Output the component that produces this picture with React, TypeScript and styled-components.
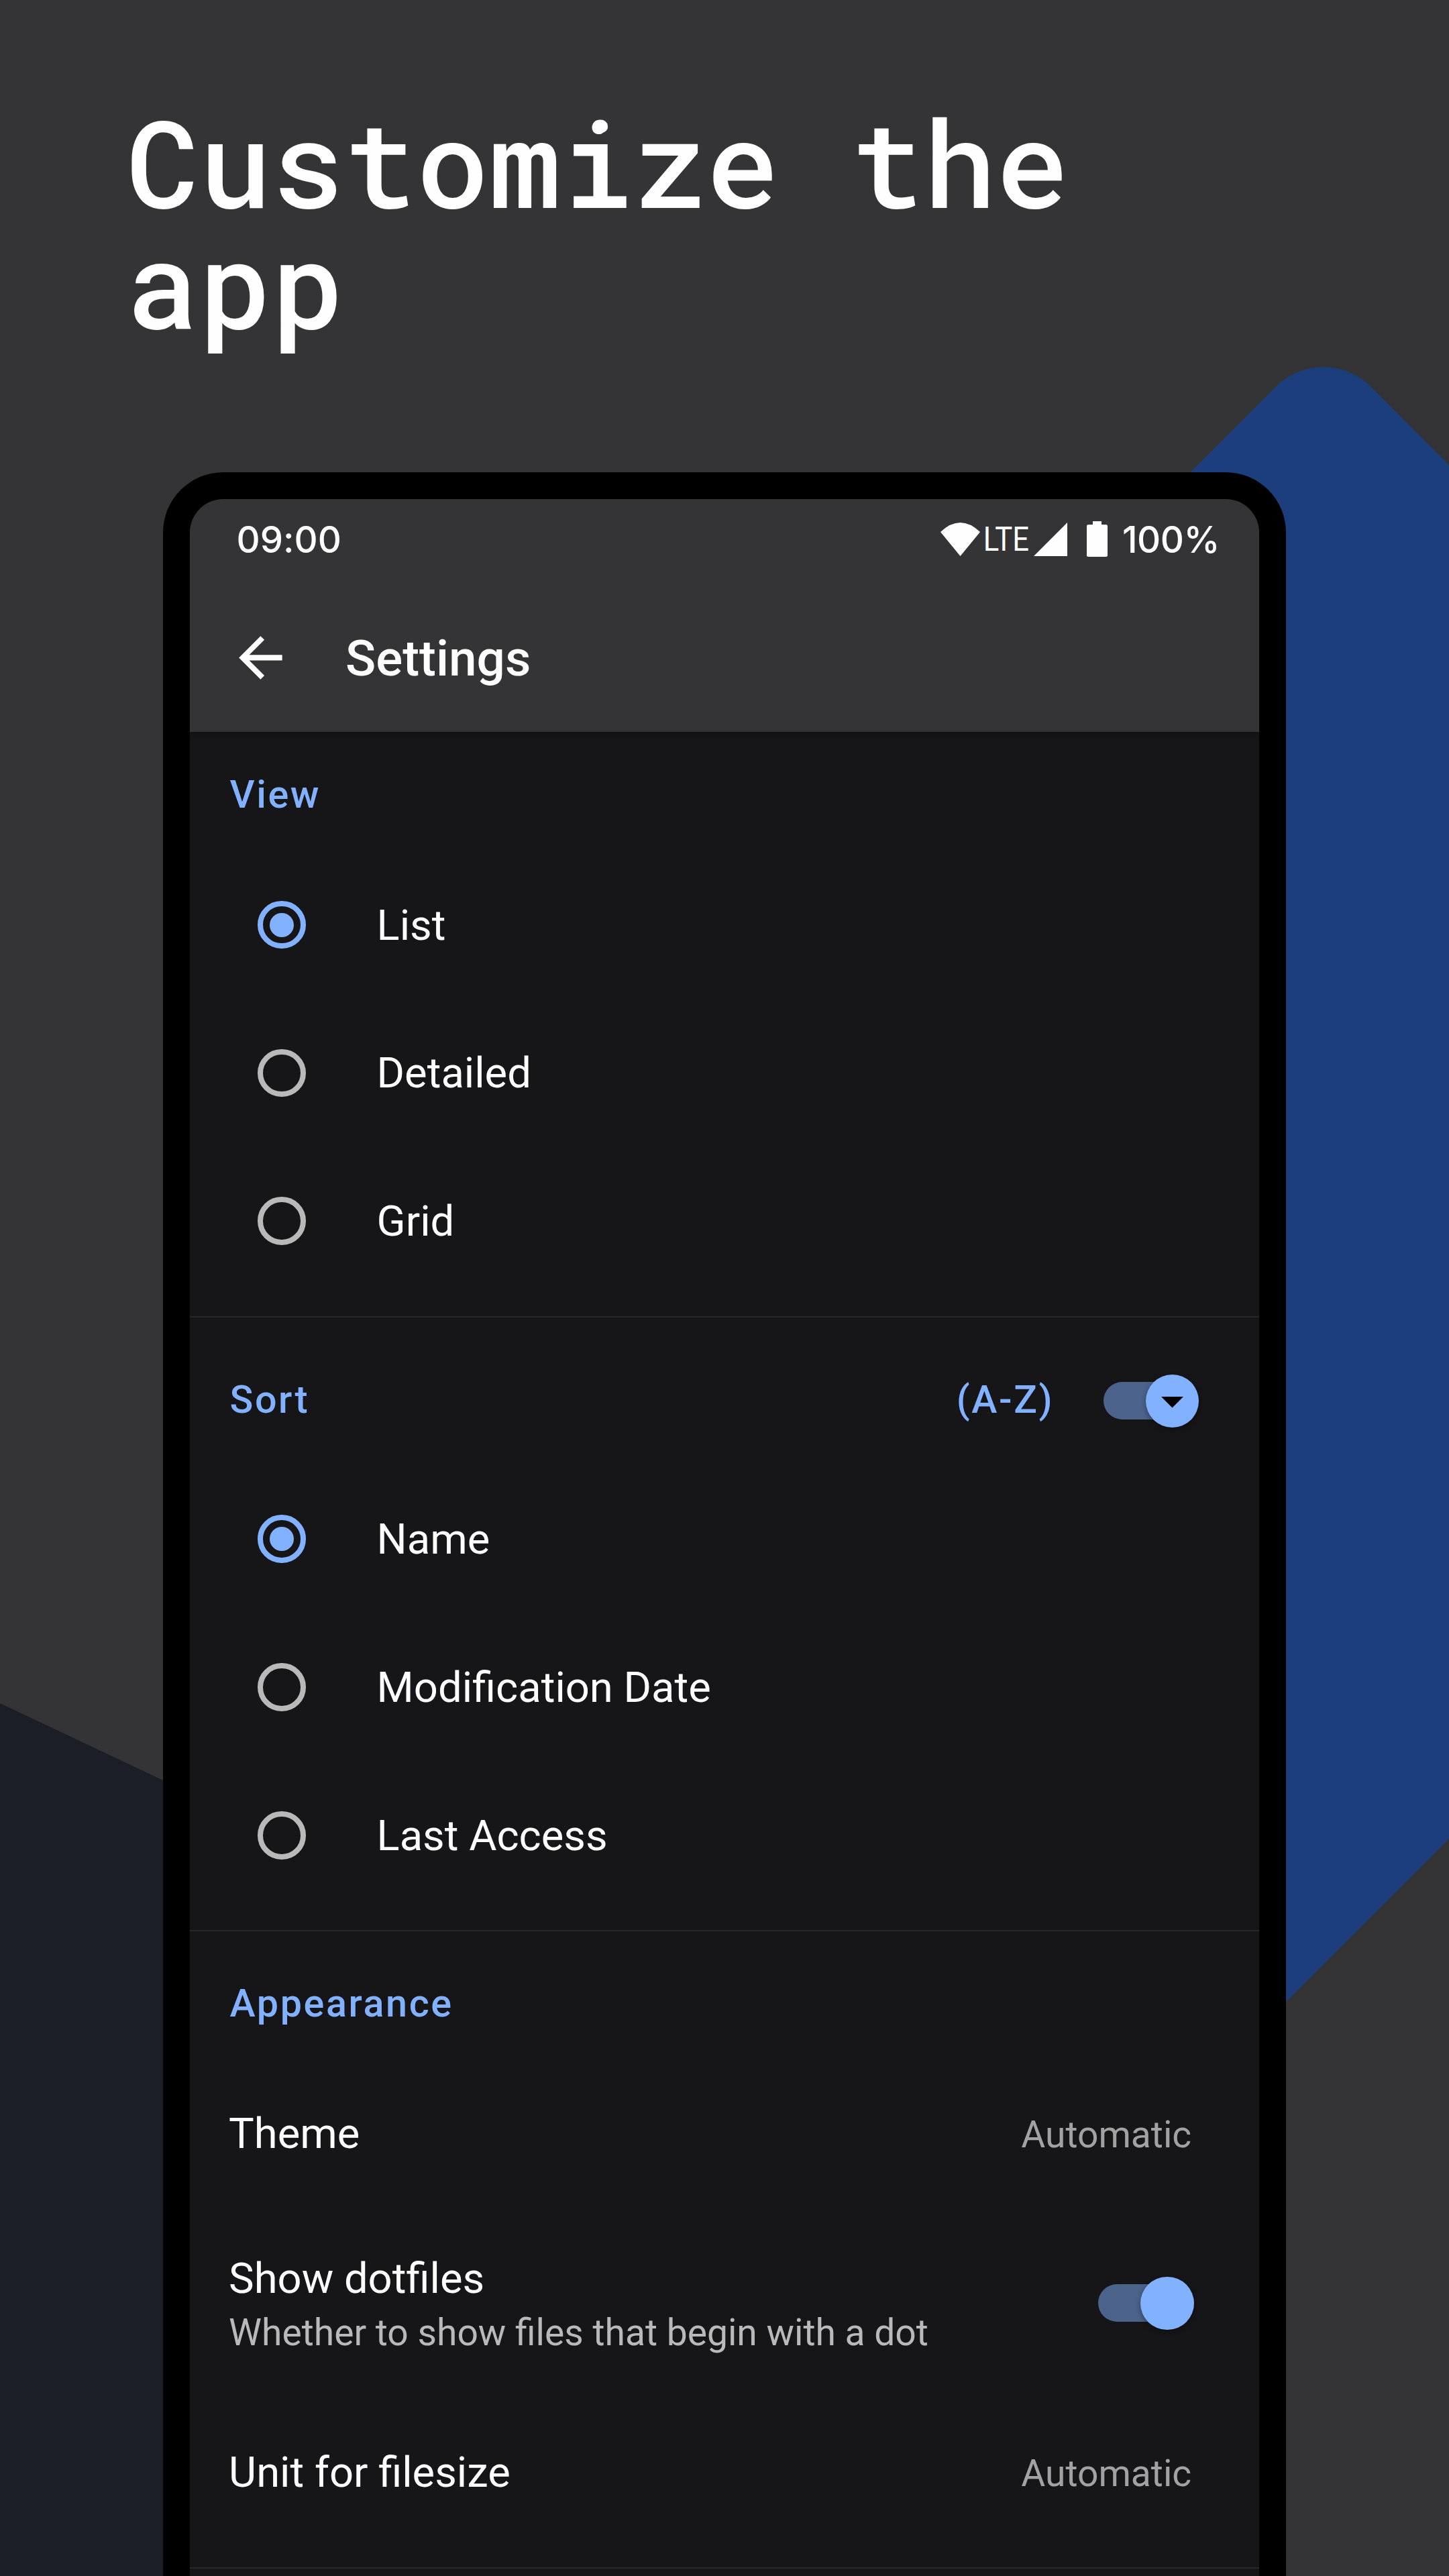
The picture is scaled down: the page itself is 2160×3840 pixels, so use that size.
import React from "react";
import styled, { createGlobalStyle } from "styled-components";

const color = {
  backdrop: "#343436",
  screen: "#161618",
  accent: "#82b1ff",
  track: "#4c638b",
  text: "#fefefe",
  muted: "#b9b9ba",
  value: "#a2a2a3",
  ring: "#b9b9ba",
  divider: "#28282a",
};

const GlobalStyle = createGlobalStyle`
  *, *::before, *::after { box-sizing: border-box; }
  body {
    margin: 0;
    background: ${color.backdrop};
    font-family: Roboto, "Liberation Sans", sans-serif;
    color: ${color.text};
  }
`;

const Page = styled.main`
  position: relative;
  width: 2160px;
  height: 3840px;
  overflow: hidden;
  display: flex;
  flex-direction: column;
  padding-top: 150px;
  background: ${color.backdrop};
`;

const Backdrop = styled.svg`
  position: absolute;
  inset: 0;
  width: 2160px;
  height: 3840px;
`;

const Headline = styled.h1`
  position: relative;
  margin: 0 0 194.3px 188.6px;
  width: 1500px;
  font: 500 180px/180px "Roboto Mono", "DejaVu Sans Mono", monospace;
`;

const Phone = styled.section`
  position: relative;
  flex: 1;
  margin: 0 243.3px;
  padding: 40px 40px 0;
  border-radius: 90px 90px 0 0;
  background: #000;
  overflow: hidden;
`;

const Screen = styled.div`
  height: 100%;
  display: flex;
  flex-direction: column;
  border-radius: 50px 50px 0 0;
  background: ${color.screen};
  overflow: hidden;
`;

const Header = styled.header`
  flex: none;
  background: ${color.backdrop};
  box-shadow: 0 1px 10px rgba(0, 0, 0, 0.3);
`;

const StatusBar = styled.div`
  height: 119px;
  display: flex;
  align-items: center;
  padding: 0 58.6px 0 69.2px;
  font: 500 54.5px/60px Inter, "Liberation Sans", sans-serif;
  font-feature-settings: "calt" 0;
`;

const Clock = styled.span`
  margin-right: auto;
`;

const Charge = styled.span`
  letter-spacing: -0.5px;
`;

const Network = styled.span`
  width: 79.5px;
  padding-right: 2.5px;
  display: flex;
  justify-content: center;
  font: 400 49.5px/56px Roboto, "Liberation Sans", sans-serif;
`;

const Narrow = styled.span`
  transform: scaleX(0.88);
`;

const Icon = styled.svg<{ $w: number; $h: number; $gap?: number }>`
  flex: none;
  display: block;
  width: ${(p) => p.$w}px;
  height: ${(p) => p.$h}px;
  margin-right: ${(p) => p.$gap ?? 0}px;
  fill: currentColor;
`;

const Toolbar = styled.div`
  height: 228px;
  display: flex;
  align-items: center;
  padding: 6px 0 0 57.1px;
`;

const Title = styled.h2`
  margin: 0;
  padding-top: 3px;
  font-weight: 500;
  font-size: 74.7px;
  line-height: 84px;
`;

const Section = styled.section<{ $end: number }>`
  flex: none;
  display: flex;
  flex-direction: column;
  padding-bottom: ${(p) => p.$end}px;
  border-bottom: 2px solid ${color.divider};
`;

const SectionHead = styled.div<{ $h: number; $shift: number }>`
  height: ${(p) => p.$h}px;
  display: flex;
  align-items: center;
  padding: ${(p) => p.$shift}px 89.4px 0 59.2px;
`;

const Label = styled.span`
  padding-bottom: 3px;
  color: ${color.accent};
  font-weight: 500;
  font-size: 57.5px;
  line-height: 64px;
  letter-spacing: 2.6px;
`;

const SectionTitle = styled(Label).attrs({ as: "h3" })`
  margin: 0 auto 0 0;
`;

const Order = styled(Label)`
  margin-right: 73.6px;
`;

const Option = styled.label`
  height: 220.8px;
  display: flex;
  align-items: center;
  gap: 105.6px;
  padding-left: 101.2px;
`;

const Radio = styled.span<{ $on: boolean }>`
  flex: none;
  display: grid;
  place-items: center;
  width: 71.5px;
  height: 71.5px;
  border: 8px solid ${(p) => (p.$on ? color.accent : color.ring)};
  border-radius: 50%;

  &::after {
    content: "";
    width: 36px;
    height: 36px;
    border-radius: 50%;
    background: ${(p) => (p.$on ? color.accent : "transparent")};
  }
`;

const ItemText = styled.span`
  font-size: 63.3px;
  line-height: 81.4px;
`;

const OptionText = styled(ItemText)`
  padding-top: 1.4px;
`;

const Setting = styled.div<{ $h: number; $right: number }>`
  height: ${(p) => p.$h}px;
  display: flex;
  align-items: center;
  justify-content: space-between;
  padding: 0 ${(p) => p.$right}px 0 57.8px;
`;

const SettingText = styled.div<{ $shift: number }>`
  display: flex;
  flex-direction: column;
  margin-top: ${(p) => p.$shift}px;
`;

const Detail = styled.span`
  color: ${color.muted};
  font-size: 55.2px;
  line-height: 81.4px;
`;

const Value = styled(Detail)`
  padding-top: 2px;
  color: ${color.value};
`;

const Switch = styled.span<{ $lift?: number }>`
  flex: none;
  display: grid;
  align-items: center;
  width: 142.6px;
  height: 80px;
  margin-bottom: ${(p) => p.$lift ?? 0}px;
`;

const Track = styled.span`
  grid-area: 1 / 1;
  width: 134px;
  height: 56px;
  border-radius: 28px;
  background: ${color.track};
`;

const Thumb = styled.span`
  grid-area: 1 / 1;
  justify-self: end;
  display: grid;
  place-items: center;
  width: 79.5px;
  height: 79.5px;
  border-radius: 50%;
  background: ${color.accent};
  color: #000;
  box-shadow: 0 3px 8px rgba(0, 0, 0, 0.35);
`;

type Choice = { label: string; on?: boolean };

const viewChoices: Choice[] = [{ label: "List", on: true }, { label: "Detailed" }, { label: "Grid" }];
const sortChoices: Choice[] = [{ label: "Name", on: true }, { label: "Modification Date" }, { label: "Last Access" }];

function Choices({ items }: { items: Choice[] }) {
  return (
    <>
      {items.map((c) => (
        <Option key={c.label}>
          <Radio $on={!!c.on} />
          <OptionText>{c.label}</OptionText>
        </Option>
      ))}
    </>
  );
}

export default function App() {
  return (
    <Page>
      <GlobalStyle />
      <Backdrop viewBox="0 0 2160 3840" aria-hidden="true">
        <path
          fill="#1d3e7d"
          d="M1500 979 L1902 576.3 A100 100 0 0 1 2043.4 576.3 L2160 693 V2741 L1800 3101 H1500 Z"
        />
        <path fill="#1b1e26" d="M0 2539 L300 2680.7 V3840 H0 Z" />
      </Backdrop>

      <Headline>Customize the app</Headline>

      <Phone>
        <Screen>
          <Header>
            <StatusBar>
              <Clock>09:00</Clock>
              <Icon $w={59} $h={50} viewBox="0 0 59 50">
                <path d="M0 14 Q29.5 -14 59 14 L29.5 50 Z" />
              </Icon>
              <Network>
                <Narrow>LTE</Narrow>
              </Network>
              <Icon $w={50} $h={50} $gap={29.5} viewBox="0 0 50 50">
                <path d="M50 0 V50 H0 Z" />
              </Icon>
              <Icon $w={31} $h={53} $gap={21.7} viewBox="0 0 31 53">
                <path d="M9 0 H22 V5 H28.5 Q31 5 31 7.500 V50.500 Q31 53 28.500 53 H2.500 Q0 53 0 50.500 V7.500 Q0 5 2.500 5 H9 Z" />
              </Icon>
              <Charge>100%</Charge>
            </StatusBar>
            <Toolbar>
              <Icon $w={96.8} $h={96.8} $gap={77.8} viewBox="0 0 24 24">
                <path d="M20 11H7.83l5.59-5.59L12 4l-8 8 8 8 1.41-1.41L7.83 13H20v-2z" />
              </Icon>
              <Title>Settings</Title>
            </Toolbar>
          </Header>

          <Section $end={31.6}>
            <SectionHead $h={176.9} $shift={13}>
              <SectionTitle>View</SectionTitle>
            </SectionHead>
            <Choices items={viewChoices} />
          </Section>

          <Section $end={31.1}>
            <SectionHead $h={219.6} $shift={29}>
              <SectionTitle>Sort</SectionTitle>
              <Order>(A-Z)</Order>
              <Switch>
                <Track />
                <Thumb>
                  <Icon $w={79} $h={79} viewBox="0 0 24 24">
                    <path d="M7 10l5 5 5-5z" />
                  </Icon>
                </Thumb>
              </Switch>
            </SectionHead>
            <Choices items={sortChoices} />
          </Section>

          <Section $end={40}>
            <SectionHead $h={202.6} $shift={15}>
              <SectionTitle>Appearance</SectionTitle>
            </SectionHead>
            <Setting $h={200} $right={100.5}>
              <SettingText $shift={-2}>
                <ItemText>Theme</ItemText>
              </SettingText>
              <Value>Automatic</Value>
            </Setting>
            <Setting $h={305} $right={97}>
              <SettingText $shift={6}>
                <ItemText>Show dotfiles</ItemText>
                <Detail>Whether to show files that begin with a dot</Detail>
              </SettingText>
              <Switch $lift={2}>
                <Track />
                <Thumb />
              </Switch>
            </Setting>
            <Setting $h={200} $right={100.5}>
              <SettingText $shift={-3}>
                <ItemText>Unit for filesize</ItemText>
              </SettingText>
              <Value>Automatic</Value>
            </Setting>
          </Section>
        </Screen>
      </Phone>
    </Page>
  );
}
